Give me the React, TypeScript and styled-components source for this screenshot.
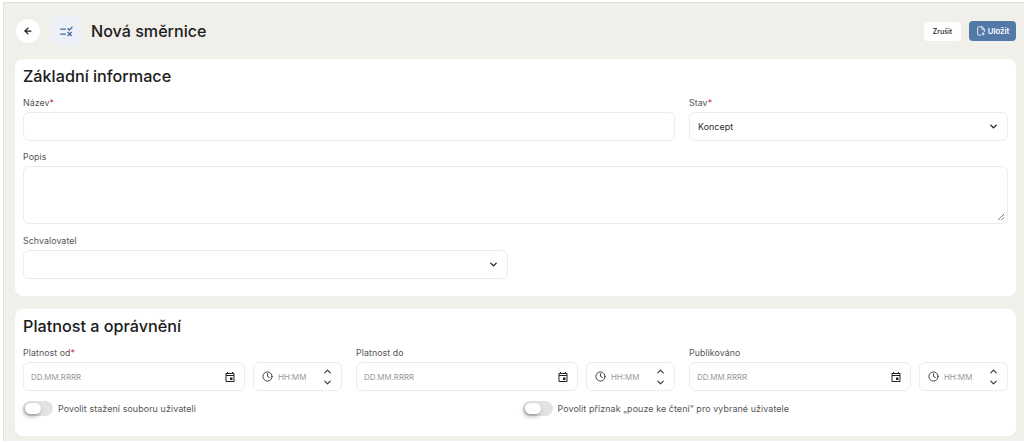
import React, { FC, ReactNode } from "react";
import styled, { createGlobalStyle } from "styled-components";
import { Clock, ChevronDown, ChevronUp, ArrowLeft, FilePlus2 } from "lucide-react";
import { MdRule, MdOutlineEvent } from "react-icons/md";

const GlobalStyle = createGlobalStyle`
  html, body {
    margin: 0;
    padding: 0;
    background: #ffffff;
  }
  body {
    font-family: "Inter", "Liberation Sans", sans-serif;
    color: #1f1f1f;
  }
`;

const Page = styled.div`
  width: 1021px;
  height: 439px;
  margin: 2px 0 0 3px;
  border-top: 1px solid #dfdfdc;
  border-left: 1px solid #dfdfdc;
  box-sizing: border-box;
  background: #f0efea;
  padding: 0 8px 0 11px;
  overflow: hidden;
`;

const Header = styled.header`
  height: 56px;
  display: flex;
  align-items: center;
`;

const BackButton = styled.button`
  width: 24px;
  height: 24px;
  border-radius: 50%;
  border: 0;
  padding: 0;
  margin-left: 1px;
  background: #ffffff;
  color: #1a1a1a;
  display: flex;
  align-items: center;
  justify-content: center;
`;

const TitleIcon = styled.div`
  width: 30px;
  height: 30px;
  margin-left: 11px;
  border-radius: 6px;
  background: #edf1f7;
  color: #3f6ba3;
  display: flex;
  align-items: center;
  justify-content: center;
`;

const Title = styled.h1`
  margin: 0 0 0 10px;
  font-size: 16.1px;
  font-weight: 500;
  color: #1c1c1c;
  flex: 1;
`;

const HeaderButton = styled.button<{ $primary?: boolean }>`
  height: ${({ $primary }) => ($primary ? "20px" : "19px")};
  width: ${({ $primary }) => ($primary ? "47px" : "37px")};
  margin-left: ${({ $primary }) => ($primary ? "8px" : "0")};
  border: 0;
  border-radius: 4px;
  padding: 0;
  background: ${({ $primary }) => ($primary ? "#5379a8" : "#ffffff")};
  color: ${({ $primary }) => ($primary ? "#ffffff" : "#222222")};
  font: ${({ $primary }) => ($primary ? "600 7.8px" : "500 7px")} "Inter", sans-serif;
  display: flex;
  align-items: center;
  justify-content: center;
  gap: 2px;
`;

const Card = styled.section`
  background: #ffffff;
  border-radius: 8px;
  padding: 8px 8px 0 8px;
  box-sizing: border-box;
`;

const FirstCard = styled(Card)`
  height: 237px;
`;

const SecondCard = styled(Card)`
  height: 127px;
  margin-top: 13px;
`;

const CardTitle = styled.h2`
  margin: 0;
  font-size: 16.2px;
  line-height: 19px;
  font-weight: 500;
  color: #1c1c1c;
`;

const MainRow = styled.div`
  display: grid;
  grid-template-columns: 652fr 319fr;
  gap: 14px;
  margin-top: 11px;
`;

const HalfRow = styled.div`
  display: grid;
  grid-template-columns: 485px 1fr;
  gap: 14px;
  margin-top: 1px;
`;

const Field = styled.div`
  display: flex;
  flex-direction: column;
  min-width: 0;
`;

const SpacedField = styled(Field)`
  margin-top: 10px;
`;

const Label = styled.label`
  font-size: 8.8px;
  letter-spacing: 0.08px;
  line-height: 11px;
  height: 11px;
  margin-bottom: 4px;
  color: #555555;
`;

const Required = styled.span`
  color: #d8263c;
`;

const InputBox = styled.div`
  height: 29px;
  box-sizing: border-box;
  border: 1px solid #ececec;
  border-radius: 6px;
  background: #ffffff;
  display: flex;
  align-items: center;
  padding: 0 8px 0 7px;
  font-size: 8.8px;
  letter-spacing: 0.1px;
  color: #2a2a2a;
`;

const SelectBox = styled(InputBox)`
  justify-content: space-between;
  padding: 0 8px 0 8px;
`;

const TextArea = styled(InputBox)`
  height: 58px;
  position: relative;
`;

const ResizeGrip = styled.svg`
  position: absolute;
  right: 2px;
  bottom: 2px;
`;

const DateGroups = styled.div`
  display: grid;
  grid-template-columns: repeat(3, 319px);
  gap: 14px;
  margin-top: 11px;
`;

const DateRow = styled.div`
  display: grid;
  grid-template-columns: 222px 89px;
  gap: 8px;
`;

const Placeholder = styled.span`
  flex: 1;
  color: #999999;
  font-size: 7.9px;
  letter-spacing: 0;
`;

const TimeBox = styled(InputBox)`
  padding: 0 8px 0 8px;
  gap: 5px;
`;

const Spinner = styled.div`
  display: flex;
  flex-direction: column;
  gap: 0;
  color: #333333;
`;

const ToggleRow = styled.div`
  display: grid;
  grid-template-columns: 1fr 1fr;
  gap: 14px;
  margin-top: 10px;
`;

const ToggleItem = styled.div`
  display: flex;
  align-items: center;
  gap: 5px;
  font-size: 8.9px;
  letter-spacing: 0.1px;
  color: #555555;
`;

const ToggleTrack = styled.span`
  width: 30px;
  height: 15px;
  border-radius: 8px;
  background: #e3e3e3;
  position: relative;
  display: block;
`;

const ToggleKnob = styled.span`
  position: absolute;
  left: 2px;
  top: 2px;
  width: 16px;
  height: 11px;
  border-radius: 6px;
  background: #ffffff;
  box-shadow: -1px 2px 4px rgba(0, 0, 0, 0.35);
`;

const Select: FC<{ value?: string }> = ({ value }) => (
  <SelectBox>
    <span>{value}</span>
    <ChevronDown size={11} strokeWidth={3} color="#222" />
  </SelectBox>
);

const DateTimeField: FC<{ label: ReactNode }> = ({ label }) => (
  <Field>
    <Label>{label}</Label>
    <DateRow>
      <InputBox>
        <Placeholder>DD.MM.RRRR</Placeholder>
        <MdOutlineEvent size={12} color="#222" />
      </InputBox>
      <TimeBox>
        <Clock size={11} color="#333" />
        <Placeholder>HH:MM</Placeholder>
        <Spinner>
          <ChevronUp size={11} strokeWidth={2.4} />
          <ChevronDown size={11} strokeWidth={2.4} />
        </Spinner>
      </TimeBox>
    </DateRow>
  </Field>
);

const Toggle: FC<{ label: string }> = ({ label }) => (
  <ToggleItem>
    <ToggleTrack>
      <ToggleKnob />
    </ToggleTrack>
    {label}
  </ToggleItem>
);

const App: FC = () => (
  <Page>
    <GlobalStyle />
    <Header>
      <BackButton>
        <ArrowLeft size={10} strokeWidth={3} />
      </BackButton>
      <TitleIcon>
        <MdRule size={15} />
      </TitleIcon>
      <Title>Nová směrnice</Title>
      <HeaderButton>Zrušit</HeaderButton>
      <HeaderButton $primary>
        <FilePlus2 size={10} />
        Uložit
      </HeaderButton>
    </Header>

    <FirstCard>
      <CardTitle>Základní informace</CardTitle>
      <MainRow>
        <Field>
          <Label>
            Název<Required>*</Required>
          </Label>
          <InputBox />
        </Field>
        <Field>
          <Label>
            Stav<Required>*</Required>
          </Label>
          <Select value="Koncept" />
        </Field>
      </MainRow>
      <SpacedField>
        <Label>Popis</Label>
        <TextArea>
          <ResizeGrip width="8" height="8" viewBox="0 0 8 8">
            <path d="M7 1 L1 7 M7 4.5 L4.5 7" stroke="#777" strokeWidth="1" />
          </ResizeGrip>
        </TextArea>
      </SpacedField>
      <SpacedField>
        <HalfRow>
          <Field>
            <Label>Schvalovatel</Label>
            <Select />
          </Field>
        </HalfRow>
      </SpacedField>
    </FirstCard>

    <SecondCard>
      <CardTitle>Platnost a oprávnění</CardTitle>
      <DateGroups>
        <DateTimeField
          label={
            <>
              Platnost od<Required>*</Required>
            </>
          }
        />
        <DateTimeField label="Platnost do" />
        <DateTimeField label="Publikováno" />
      </DateGroups>
      <ToggleRow>
        <Toggle label="Povolit stažení souboru uživateli" />
        <Toggle label="Povolit příznak „pouze ke čtení“ pro vybrané uživatele" />
      </ToggleRow>
    </SecondCard>
  </Page>
);

export default App;
